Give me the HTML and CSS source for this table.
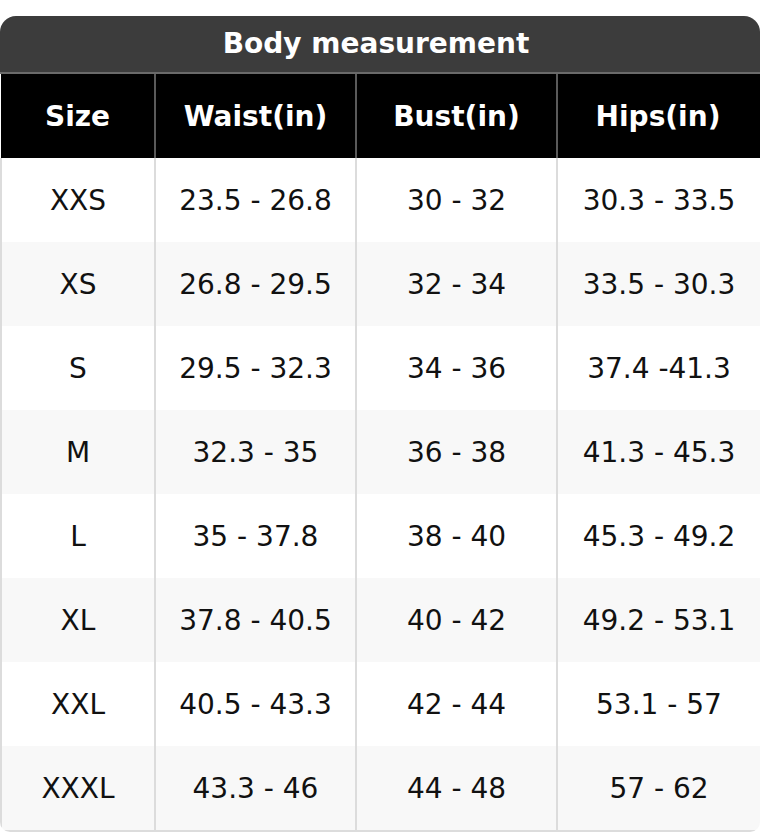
FILE: index.html
```html
<!DOCTYPE html>
<html>
<head>
<meta charset="utf-8">
<link rel="stylesheet" href="styles.css">
</head>
<body>
<div class="chart">
  <div class="title">Body measurement</div>
  <table class="sizes">
    <colgroup>
      <col class="c1"><col class="c2"><col class="c3"><col class="c4">
    </colgroup>
    <thead>
      <tr><th>Size</th><th>Waist(in)</th><th>Bust(in)</th><th>Hips(in)</th></tr>
    </thead>
    <tbody>
      <tr><td>XXS</td><td>23.5 - 26.8</td><td>30 - 32</td><td>30.3 - 33.5</td></tr>
      <tr><td>XS</td><td>26.8 - 29.5</td><td>32 - 34</td><td>33.5 - 30.3</td></tr>
      <tr><td>S</td><td>29.5 - 32.3</td><td>34 - 36</td><td>37.4 -41.3</td></tr>
      <tr><td>M</td><td>32.3 - 35</td><td>36 - 38</td><td>41.3 - 45.3</td></tr>
      <tr><td>L</td><td>35 - 37.8</td><td>38 - 40</td><td>45.3 - 49.2</td></tr>
      <tr><td>XL</td><td>37.8 - 40.5</td><td>40 - 42</td><td>49.2 - 53.1</td></tr>
      <tr><td>XXL</td><td>40.5 - 43.3</td><td>42 - 44</td><td>53.1 - 57</td></tr>
      <tr><td>XXXL</td><td>43.3 - 46</td><td>44 - 48</td><td>57 - 62</td></tr>
    </tbody>
  </table>
</div>
</body>
</html>
```
FILE: styles.css
```css
html, body {
  margin: 0;
  padding: 0;
  background: #fff;
}
body {
  padding-top: 16px;
  font-family: "DejaVu Sans", "Liberation Sans", sans-serif;
}
.chart {
  width: 760px;
  border-radius: 16px 16px 10px 10px;
  overflow: hidden;
}
.title {
  height: 56px;
  line-height: 56px;
  padding-right: 8px;
  background: #3c3c3c;
  color: #fff;
  font-weight: bold;
  font-size: 28px;
  text-align: center;
  border-bottom: 2px solid #6a6a6a;
}
.sizes {
  width: 760px;
  border-collapse: collapse;
  table-layout: fixed;
}
.c1 { width: 154px; }
.c2 { width: 201px; }
.c3 { width: 201px; }
.c4 { width: 204px; }
.sizes th {
  height: 84px;
  padding: 0;
  background: #000;
  color: #fff;
  font-weight: bold;
  font-size: 28px;
  text-align: center;
  border-left: 2px solid #5a5a5a;
}
.sizes th:first-child { border-left: none; }
.sizes th:last-child { padding-right: 3px; }
.sizes td {
  height: 84px;
  padding: 0;
  font-size: 28px;
  color: #111;
  text-align: center;
  border-left: 2px solid #dcdcdc;
}
.sizes td:first-child { border-left: 2px solid #dcdcdc; }
.sizes td:last-child { border-right: 2px solid #dcdcdc; }
.sizes tbody tr:nth-child(even) td { background: #f8f8f8; }
.sizes tbody tr:last-child td { border-bottom: 2px solid #dcdcdc; }
```
